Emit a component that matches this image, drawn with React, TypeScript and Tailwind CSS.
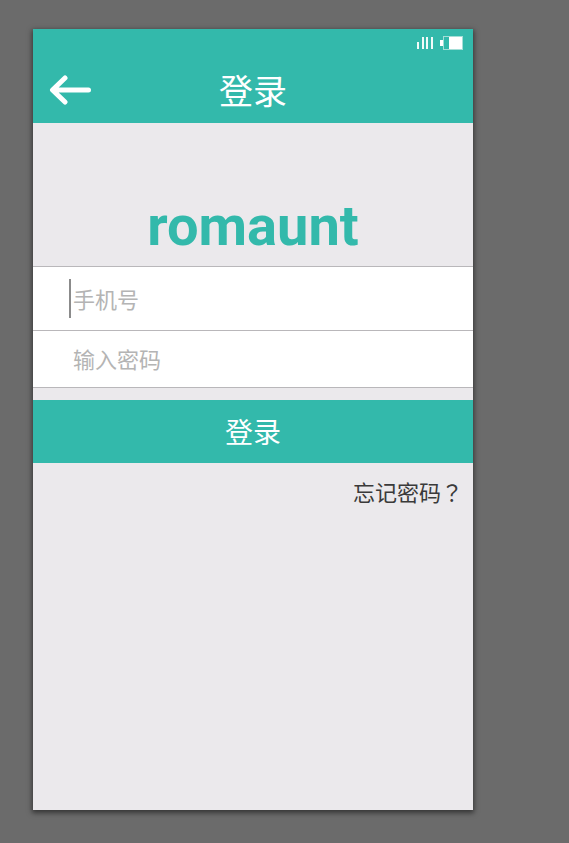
function SignalIcon() {
  return (
    <svg width="17" height="14" viewBox="0 0 17 14" fill="#f1fbf9" aria-hidden="true">
      <rect x="0" y="6" width="2" height="7" />
      <rect x="5" y="1" width="2" height="12" />
      <rect x="9" y="1" width="2" height="12" />
      <rect x="14" y="1" width="2" height="12" />
    </svg>
  );
}

function BatteryIcon() {
  return (
    <svg width="23" height="14" viewBox="0 0 23 14" aria-hidden="true">
      <rect x="0" y="4" width="3" height="6" fill="#fff" />
      <rect x="3.5" y="0.5" width="19" height="13" fill="none" stroke="#a5ded7" />
      <rect x="9" y="1" width="13" height="12" fill="#fff" />
    </svg>
  );
}

export default function App() {
  return (
    <div className="min-h-screen bg-[#6b6b6b] pt-[29px] pr-24 pb-[33px] pl-[33px] font-['Noto_Sans_CJK_SC',sans-serif]">
      <main className="flex min-h-[781px] flex-col bg-[#ebe9ec] shadow-[0_2px_5px_1px_rgba(0,0,0,0.5)]">
        <header className="bg-[#33b9ab]">
          <div className="flex h-7 items-center justify-end gap-[6px] pr-[10px]">
            <SignalIcon />
            <BatteryIcon />
          </div>
          <div className="grid h-[66px] grid-cols-[1fr_auto_1fr] items-center px-4">
            <button type="button" aria-label="返回" className="w-fit">
              <svg width="42" height="30" viewBox="0 0 42 30" fill="none" stroke="#fff" strokeWidth="5" strokeLinecap="round" strokeLinejoin="round" aria-hidden="true">
                <path d="M39.5 15H4M16 3L3.500 15L16 27" />
                <path d="M5 12.500V17.500L8 15Z" strokeWidth="2" fill="#fff" />
              </svg>
            </button>
            <h1 className="text-[34px] leading-[64px] text-white">登录</h1>
          </div>
        </header>

        <div className="flex h-[143px] items-end justify-center pb-2">
          <p className="font-['Roboto',sans-serif] text-[56px] leading-[64px] font-bold text-[#33b9ab]">romaunt</p>
        </div>

        <form onSubmit={(e) => e.preventDefault()}>
          <div className="border-y border-[#b9b7ba] bg-white">
            <div className="flex h-16 items-center border-b border-[#b9b7ba] pl-9">
              <span className="h-[39px] w-[2px] bg-[#8b8b8b]" />
              <input
                type="tel"
                aria-label="手机号"
                placeholder="手机号"
                className="h-full min-w-0 flex-1 pb-[2px] pl-[2px] text-[22px] outline-none placeholder:text-[#b4b4b4]"
              />
            </div>
            <input
              type="password"
              aria-label="输入密码"
              placeholder="输入密码"
              className="block h-14 w-full pb-[2px] pl-10 text-[22px] outline-none placeholder:text-[#b4b4b4]"
            />
          </div>
          <button type="submit" className="mt-3 block h-[63px] w-full bg-[#33b9ab] pb-[2px] text-[28px] text-white">
            登录
          </button>
        </form>

        <a href="#forgot" className="mt-[10px] mr-[10px] self-end text-[22px] leading-9 text-[#3a3a3a]">
          忘记密码<span className="font-['Noto_Sans_CJK_TC',sans-serif]" lang="zh-TW">？</span>
        </a>
      </main>
    </div>
  );
}
